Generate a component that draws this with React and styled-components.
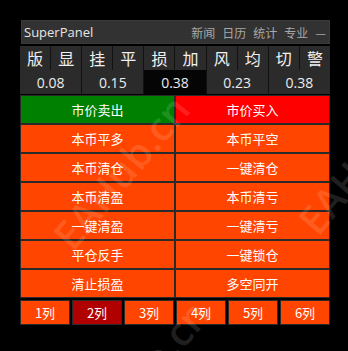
import React from "react";
import styled, { createGlobalStyle } from "styled-components";

const Global = createGlobalStyle`
  html, body { margin: 0; padding: 0; background: #000; }
  body { font-family: "Noto Sans", "Noto Sans CJK SC", sans-serif; }
`;

const Page = styled.div`
  position: relative;
  width: 348px;
  height: 351px;
  background: #000;
  overflow: hidden;
  padding: 20px 0 0 20px;
  box-sizing: border-box;
`;

const Panel = styled.div`
  width: 310px;
  display: flex;
  flex-direction: column;
`;

const TitleBar = styled.div`
  height: 24px;
  margin-left: 1px;
  background: #323232;
  border: 1px solid #3a3a3a;
  box-sizing: border-box;
  display: flex;
  align-items: center;
  justify-content: space-between;
  padding: 0 3px 0 2px;
`;

const Title = styled.span`
  color: #e6e6e6;
  font-family: "Open Sans", "Noto Sans", sans-serif;
  font-size: 13px;
`;

const Menu = styled.div`
  display: flex;
  gap: 7px;
  color: #a8a8a8;
  font-family: "Noto Sans CJK SC", sans-serif;
  font-size: 12px;
`;

const Header = styled.div`
  margin-top: 2px;
  display: grid;
  grid-template-columns: repeat(5, 1fr);
  gap: 0 1px;
  background: #111;
`;

const Group = styled.div`
  display: grid;
  grid-template-columns: 1fr 1fr;
  grid-template-rows: 24px 24px;
  gap: 0 1px;
  background: #111;
`;

const Label = styled.div`
  background: #2b2b2b;
  color: #f0f0f0;
  font-family: "Noto Sans CJK SC", sans-serif;
  font-size: 16px;
  display: flex;
  align-items: center;
  justify-content: center;
`;

const Value = styled.div`
  grid-column: 1 / span 2;
  background: ${(p) => (p.$active ? "#050505" : "#2b2b2b")};
  color: #ececec;
  font-family: "Open Sans", "Noto Sans", sans-serif;
  font-size: 14px;
  display: flex;
  align-items: center;
  justify-content: center;
`;

const Buttons = styled.div`
  margin-top: 1px;
  display: grid;
  grid-template-columns: 1fr 1fr;
  grid-auto-rows: 29px;
`;

const Btn = styled.div`
  background: ${(p) => p.$bg};
  border: 1px solid #2a2a2a;
  color: #fff;
  font-family: "Noto Sans CJK SC", sans-serif;
  font-size: 13px;
  display: flex;
  align-items: center;
  justify-content: center;
  box-sizing: border-box;
`;

const Cols = styled.div`
  margin-top: 2px;
  display: grid;
  grid-template-columns: repeat(6, 1fr);
  gap: 2px;
  height: 25px;
`;

const ColBtn = styled(Btn)`
  font-size: 13px;
`;

const Watermark = styled.span`
  position: absolute;
  left: ${(p) => p.$x}px;
  top: ${(p) => p.$y}px;
  transform: rotate(-50deg);
  transform-origin: left top;
  font-family: "Open Sans", sans-serif;
  font-size: 40px;
  font-weight: 600;
  color: rgba(255, 255, 255, 0.13);
  white-space: nowrap;
  pointer-events: none;
`;

const groups = [
  ["版", "显", "0.08"],
  ["挂", "平", "0.15"],
  ["损", "加", "0.38", true],
  ["风", "均", "0.23"],
  ["切", "警", "0.38"],
];

const rows = [
  ["市价卖出", "#008000", "市价买入", "#ff0000"],
  ["本币平多", "#ff4500", "本币平空", "#ff4500"],
  ["本币清仓", "#ff4500", "一键清仓", "#ff4500"],
  ["本币清盈", "#ff4500", "本币清亏", "#ff4500"],
  ["一键清盈", "#ff4500", "一键清亏", "#ff4500"],
  ["平仓反手", "#ff4500", "一键锁仓", "#ff4500"],
  ["清止损盈", "#ff4500", "多空同开", "#ff4500"],
];

const cols = ["1列", "2列", "3列", "4列", "5列", "6列"];

export default function App() {
  return (
    <Page>
      <Global />
      <Panel>
        <TitleBar>
          <Title>SuperPanel</Title>
          <Menu>
            <span>新闻</span>
            <span>日历</span>
            <span>统计</span>
            <span>专业</span>
            <span>—</span>
          </Menu>
        </TitleBar>
        <Header>
          {groups.map(([a, b, v, act]) => (
            <Group key={a}>
              <Label>{a}</Label>
              <Label>{b}</Label>
              <Value $active={act}>{v}</Value>
            </Group>
          ))}
        </Header>
        <Buttons>
          {rows.map(([l, lc, r, rc]) => (
            <React.Fragment key={l}>
              <Btn $bg={lc}>{l}</Btn>
              <Btn $bg={rc}>{r}</Btn>
            </React.Fragment>
          ))}
        </Buttons>
        <Cols>
          {cols.map((c, i) => (
            <ColBtn key={c} $bg={i === 1 ? "#b00000" : "#ff4500"}>
              {c}
            </ColBtn>
          ))}
        </Cols>
      </Panel>
      <Watermark $x={40} $y={225}>EAHub.cn</Watermark>
      <Watermark $x={285} $y={210}>EAHub.cn</Watermark>
      <Watermark $x={60} $y={430}>EAHub.cn</Watermark>
    </Page>
  );
}
